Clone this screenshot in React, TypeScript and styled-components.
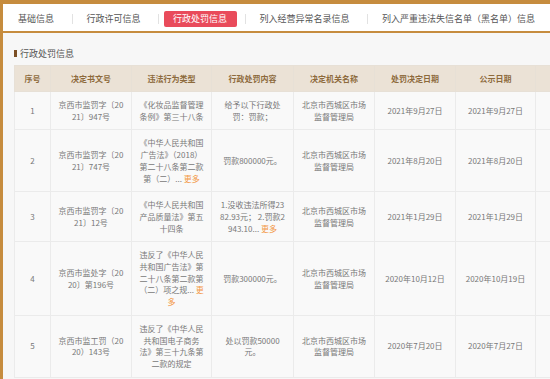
import { Fragment } from "react";
import styled, { createGlobalStyle } from "styled-components";

const GlobalStyle = createGlobalStyle`
  html, body {
    margin: 0;
    padding: 0;
    overflow: hidden;
    background: #f7f7f7;
  }
  body {
    font-family: "Noto Sans CJK SC", "Noto Sans", sans-serif;
  }
`;

const Page = styled.div`
  width: 900px;
  height: 379px;
  border-top: 4px solid #c68c3e;
  border-left: 3px solid #c68c3e;
  background: #f7f7f7;
`;
const Nav = styled.div`
  height: 29px;
  background: #fff;
  border-bottom: 2px solid #c68c3e;
  display: flex;
  align-items: center;
  padding: 2px 0 0 5.5px;
  box-sizing: border-box;
`;
const Tab = styled.div<{ $active?: boolean }>`
  height: 16px;
  line-height: 16px;
  padding: 0 9.5px;
  font-size: 9px;
  border-radius: 2px;
  white-space: nowrap;
  color: ${(p) => (p.$active ? "#fff" : "#555")};
  background: ${(p) => (p.$active ? "#e94b5b" : "transparent")};
`;
const Sep = styled.div`
  width: 1px;
  height: 10px;
  background: #e2e2e2;
  margin: 0 4.5px 0 8px;
`;
const Content = styled.div`
  padding: 13px 0 0 11px;
`;
const Heading = styled.div`
  display: flex;
  align-items: center;
  height: 15px;
  margin-bottom: 4px;
  font-size: 9px;
  color: #555;
  &::before {
    content: "";
    width: 2.5px;
    height: 7.5px;
    background: #7b4f25;
    margin-right: 3.5px;
  }
`;
const Table = styled.table`
  border-collapse: collapse;
  table-layout: fixed;
  width: 601px;
  font-size: 8px;
`;
const Th = styled.th`
  height: 25px;
  padding: 0;
  background: #ebe2d6;
  color: #8d6a3c;
  font-weight: bold;
  border: 1px solid #e7e0d6;
  text-align: center;
`;
const Td = styled.td`
  padding: 7px 6px;
  line-height: 11.7px;
  color: #787878;
  text-align: center;
  white-space: pre-line;
  border: 1px solid #ebebeb;
  background: #f9f9f9;
`;
const More = styled.span`
  color: #f39a4a;
  cursor: pointer;
`;

const cols = [36, 81, 80, 82, 81, 81, 80, 80];
const headers = ["序号", "决定书文号", "违法行为类型", "行政处罚内容", "决定机关名称", "处罚决定日期", "公示日期", ""];

type Cell = string | { text: string; more: string };
const rows: Cell[][] = [
  ["1", "京西市监罚字〔20\n21〕947号", "《化妆品监督管理\n条例》第三十八条", "给予以下行政处\n罚：罚款；", "北京市西城区市场\n监督管理局", "2021年9月27日", "2021年9月27日", ""],
  ["2", "京西市监罚字〔20\n21〕747号", { text: "《中华人民共和国\n广告法》（2018）\n第二十八条第二款\n第（二）... ", more: "更多" }, "罚款800000元。", "北京市西城区市场\n监督管理局", "2021年8月20日", "2021年8月20日", ""],
  ["3", "京西市监罚字〔20\n21〕12号", "《中华人民共和国\n产品质量法》第五\n十四条", { text: "1.没收违法所得23\n82.93元；  2.罚款2\n943.10... ", more: "更多" }, "北京市西城区市场\n监督管理局", "2021年1月29日", "2021年1月29日", ""],
  ["4", "京西市监处字〔20\n20〕第196号", { text: "违反了《中华人民\n共和国广告法》第\n二十八条第二款第\n（二）项之规... ", more: "更\n多" }, "罚款300000元。", "北京市西城区市场\n监督管理局", "2020年10月12日", "2020年10月19日", ""],
  ["5", "京西市监工罚（20\n20）143号", "违反了《中华人民\n共和国电子商务\n法》第三十九条第\n二款的规定", "处以罚款50000\n元。", "北京市西城区市场\n监督管理局", "2020年7月20日", "2020年7月27日", ""],
];

const tabs = ["基础信息", "行政许可信息", "行政处罚信息", "列入经营异常名录信息", "列入严重违法失信名单（黑名单）信息"];

export default function App() {
  return (
    <>
      <GlobalStyle />
      <Page>
        <Nav>
          {tabs.map((t, i) => (
            <Fragment key={t}>
              {i > 0 && <Sep />}
              <Tab $active={i === 2}>{t}</Tab>
            </Fragment>
          ))}
        </Nav>
        <Content>
          <Heading>行政处罚信息</Heading>
          <Table>
            <colgroup>
              {cols.map((w, i) => (
                <col key={i} style={{ width: w }} />
              ))}
            </colgroup>
            <thead>
              <tr>
                {headers.map((h, i) => (
                  <Th key={i}>{h}</Th>
                ))}
              </tr>
            </thead>
            <tbody>
              {rows.map((r, i) => (
                <tr key={i}>
                  {r.map((c, j) => (
                    <Td key={j}>
                      {typeof c === "string" ? c : (
                        <>
                          {c.text}
                          <More>{c.more}</More>
                        </>
                      )}
                    </Td>
                  ))}
                </tr>
              ))}
            </tbody>
          </Table>
        </Content>
      </Page>
    </>
  );
}
